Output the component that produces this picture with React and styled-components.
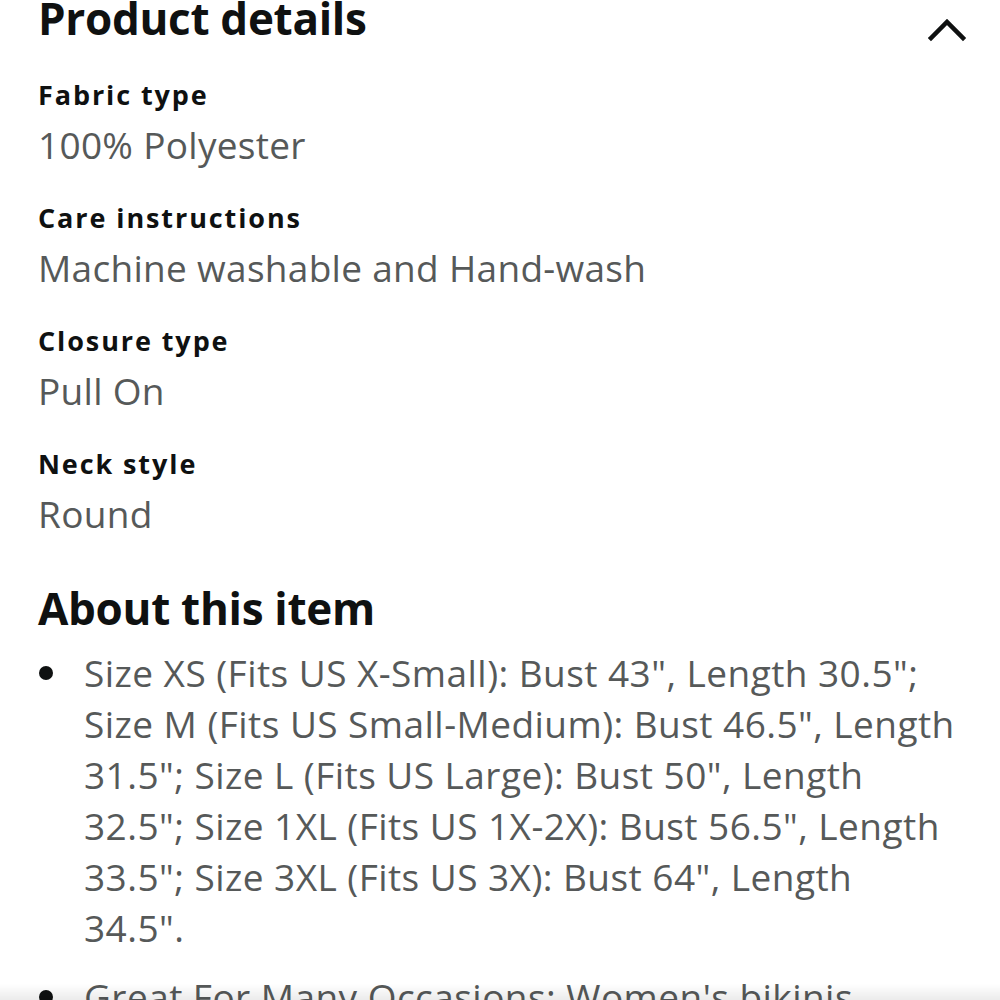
import React from "react"
import styled, { createGlobalStyle } from "styled-components"

const GlobalStyle = createGlobalStyle`
  html, body {
    margin: 0;
    padding: 0;
    background: #ffffff;
    overflow: hidden;
  }
  body {
    font-family: "Open Sans", "Noto Sans", sans-serif;
    color: #0f1111;
  }
`

const details = [
  { label: "Fabric type", value: "100% Polyester" },
  { label: "Care instructions", value: "Machine washable and Hand-wash" },
  { label: "Closure type", value: "Pull On" },
  { label: "Neck style", value: "Round" },
]

const bullets = [
  [
    'Size XS (Fits US X-Small): Bust 43", Length 30.5";',
    'Size M (Fits US Small-Medium): Bust 46.5", Length',
    '31.5"; Size L (Fits US Large): Bust 50", Length',
    '32.5"; Size 1XL (Fits US 1X-2X): Bust 56.5", Length',
    '33.5"; Size 3XL (Fits US 3X): Bust 64", Length',
    '34.5".',
  ],
  ["Great For Many Occasions: Women's bikinis"],
]

const App = () => {
  return (
    <Page>
      <GlobalStyle />
      <Header>
        <Title>Product details</Title>
        <Chevron viewBox="0 0 40 24" aria-hidden="true">
          <polyline points="3,20 19,4 35,20" />
        </Chevron>
      </Header>
      <DetailList>
        {details.map((d) => (
          <DetailRow key={d.label}>
            <Label>{d.label}</Label>
            <Value>{d.value}</Value>
          </DetailRow>
        ))}
      </DetailList>
      <SectionTitle>About this item</SectionTitle>
      <Bullets>
        {bullets.map((lines, i) => (
          <Bullet key={i}>
            {lines.map((line) => (
              <Line key={line}>{line}</Line>
            ))}
          </Bullet>
        ))}
      </Bullets>
      <BottomShade />
    </Page>
  )
}

const Page = styled.div`
  padding: 0 32px 0 38px;
  margin-top: -10px;
`

const Header = styled.div`
  display: flex;
  align-items: flex-start;
  justify-content: space-between;
`

const Title = styled.h1`
  margin: 0;
  font-size: 44px;
  line-height: 56px;
  font-weight: 700;
  letter-spacing: -0.3px;
  color: #0f1111;
`

const Chevron = styled.svg`
  width: 40px;
  height: 24px;
  margin-top: 28px;
  fill: none;
  stroke: #0f1111;
  stroke-width: 4.5;
  stroke-linecap: square;
`

const DetailList = styled.div`
  display: flex;
  flex-direction: column;
  gap: 29px;
  margin-top: 31px;
`

const DetailRow = styled.div`
  display: flex;
  flex-direction: column;
`

const Label = styled.div`
  font-size: 27px;
  line-height: 36px;
  font-weight: 700;
  letter-spacing: 1.9px;
  color: #0f1111;
`

const Value = styled.div`
  margin-top: 6px;
  font-size: 37px;
  line-height: 52px;
  color: #565959;
  letter-spacing: 0.3px;
`

const SectionTitle = styled.h2`
  margin: 40px 0 0;
  font-size: 44px;
  line-height: 56px;
  font-weight: 700;
  letter-spacing: -0.3px;
  color: #0f1111;
`

const Bullets = styled.ul`
  margin: 11px 0 0;
  padding: 0 0 0 46px;
  list-style: none;
`

const Bullet = styled.li`
  position: relative;
  margin-bottom: 18px;
  font-size: 37px;
  line-height: 51px;
  color: #565959;
  letter-spacing: 0.45px;

  &::before {
    content: "";
    position: absolute;
    left: -45px;
    top: 19px;
    width: 14px;
    height: 14px;
    border-radius: 50%;
    background: #0f1111;
  }
`

const Line = styled.span`
  display: block;
  white-space: nowrap;
`

const BottomShade = styled.div`
  position: fixed;
  left: 0;
  right: 0;
  bottom: 0;
  height: 16px;
  background: linear-gradient(to bottom, rgba(0, 0, 0, 0), rgba(0, 0, 0, 0.08));
  pointer-events: none;
`

export default App
